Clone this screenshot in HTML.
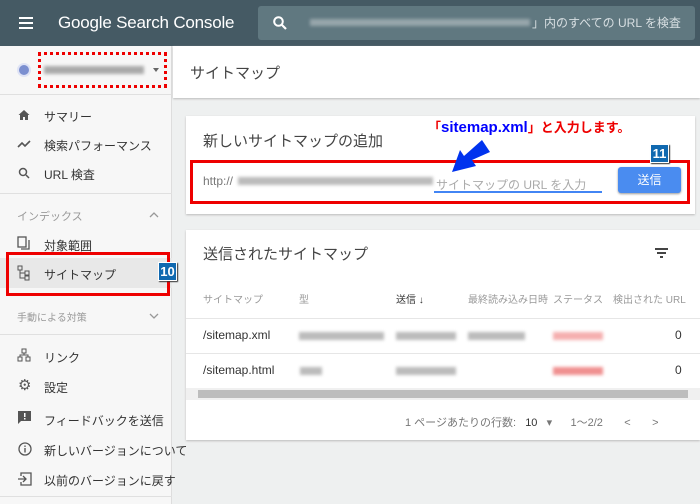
<!DOCTYPE html>
<html><head><meta charset="utf-8"><style>
*{margin:0;padding:0;box-sizing:border-box}
body{width:700px;height:504px;overflow:hidden;background:#eef0f0;font-family:"Liberation Sans","Noto Sans CJK JP",sans-serif;color:#333;position:relative}
.a{position:absolute}
.blur{position:absolute;filter:blur(1.5px);background:#bbb;height:8px}
.nav{position:absolute;left:44px;font-size:12px;color:#333}
.ic{position:absolute;left:18px}
</style></head><body>
<div class="a" style="left:0;top:0;width:700px;height:46px;background:#455a64"></div>
<div class="a" style="left:19px;top:17px;width:14px;height:2px;background:#fff;box-shadow:0 5px 0 #fff,0 10px 0 #fff"></div>
<div class="a" style="left:58px;top:13px;font-size:17px;color:#fff;letter-spacing:-0.2px">Google Search Console</div>
<div class="a" style="left:258px;top:6px;width:437px;height:34px;background:#607880;border-radius:3px"></div>
<svg class="a" style="left:272px;top:15px" width="16" height="16" viewBox="0 0 16 16"><circle cx="6.5" cy="6.5" r="4.3" fill="none" stroke="#fff" stroke-width="2"/><path d="M10 10l4 4" stroke="#fff" stroke-width="2.2"/></svg>
<div class="blur" style="left:310px;top:19px;width:220px;background:#97a6ab;height:7px"></div>
<div class="a" style="left:532px;top:14px;font-size:12px;color:#d8dfe2">」内のすべての URL を検査</div>

<div class="a" style="left:0;top:46px;width:172px;height:458px;background:#f7f7f7;border-right:1px solid #ddd"></div>
<div class="a" style="left:17px;top:63px;width:14px;height:14px;border-radius:50%;background:#7b8fd0;border:2px solid #dfe3f5"></div>
<div class="blur" style="left:44px;top:66px;width:100px;background:#aaa"></div>
<div class="a" style="left:153px;top:68px;border:3px solid transparent;border-top:4px solid #666"></div>
<div class="a" style="left:38px;top:52px;width:129px;height:36px;border:3px dotted #e00"></div>
<div class="a" style="left:0;top:94px;width:172px;height:1px;background:#e0e0e0"></div>
<svg class="a" style="left:18px;top:109px" width="12" height="12"><path d="M6 1L0.5 6H2v5h3V8h2v3h3V6h1.5Z" fill="#555"/></svg><div class="nav" style="top:108px">サマリー</div>
<svg class="a" style="left:17px;top:139px" width="14" height="10"><path d="M1 8l4-4 3 3 5-5" fill="none" stroke="#555" stroke-width="1.6"/></svg><div class="nav" style="top:137px">検索パフォーマンス</div>
<svg class="a" style="left:18px;top:167px" width="12" height="12"><circle cx="5" cy="5" r="3.5" fill="none" stroke="#555" stroke-width="1.5"/><path d="M8 8l3 3" stroke="#555" stroke-width="1.5"/></svg><div class="nav" style="top:166px">URL 検査</div>
<div class="a" style="left:0;top:193px;width:172px;height:1px;background:#e0e0e0"></div>
<div class="a" style="left:17px;top:208px;font-size:11px;color:#999">インデックス</div>
<svg class="a" style="left:149px;top:212px" width="10" height="6"><path d="M1 5l4-4 4 4" fill="none" stroke="#999" stroke-width="1.3"/></svg>
<svg class="a" style="left:17px;top:236px" width="13" height="14"><rect x="1" y="1" width="8" height="10" fill="none" stroke="#555" stroke-width="1.3"/><path d="M4 13h8V4" fill="none" stroke="#555" stroke-width="1.3"/></svg><div class="nav" style="top:237px">対象範囲</div>
<div class="a" style="left:0;top:258px;width:172px;height:30px;background:#e8e8e8"></div>
<svg class="a" style="left:17px;top:265px" width="14" height="16"><rect x="1" y="1" width="4" height="4" fill="none" stroke="#555"/><rect x="8" y="6" width="4" height="4" fill="none" stroke="#555"/><rect x="8" y="11" width="4" height="4" fill="none" stroke="#555"/><path d="M3 5v8h5M3 8h5" fill="none" stroke="#555"/></svg>
<div class="nav" style="top:266px">サイトマップ</div>
<div class="a" style="left:6px;top:252px;width:164px;height:44px;border:3px solid #e00"></div>
<div class="a" style="left:158px;top:262px;width:19px;height:19px;background:#1069b0;border:1px solid #fff;color:#fff;font-weight:bold;font-size:13px;line-height:17px;text-align:center;box-shadow:1px 1px 1px #333">10</div>
<div class="a" style="left:17px;top:309px;font-size:10px;color:#999">手動による対策</div>
<svg class="a" style="left:149px;top:313px" width="10" height="6"><path d="M1 1l4 4 4-4" fill="none" stroke="#999" stroke-width="1.3"/></svg>
<div class="a" style="left:0;top:334px;width:172px;height:1px;background:#e0e0e0"></div>
<svg class="a" style="left:17px;top:348px" width="14" height="14"><rect x="5" y="1" width="4" height="4" fill="none" stroke="#555"/><rect x="1" y="9" width="4" height="4" fill="none" stroke="#555"/><rect x="9" y="9" width="4" height="4" fill="none" stroke="#555"/><path d="M7 5v2H3v2M7 7h4v2" fill="none" stroke="#555"/></svg><div class="nav" style="top:349px">リンク</div>
<div class="ic" style="top:376px;font-size:15px;color:#555">⚙</div><div class="nav" style="top:379px">設定</div>
<svg class="a" style="left:18px;top:411px" width="13" height="13"><path d="M0 0h13v10H3l-3 3Z" fill="#555"/><rect x="6" y="2" width="1.5" height="4" fill="#fff"/><rect x="6" y="7" width="1.5" height="1.5" fill="#fff"/></svg><div class="nav" style="top:412px">フィードバックを送信</div>
<svg class="a" style="left:18px;top:442px" width="14" height="14"><circle cx="7" cy="7" r="6" fill="none" stroke="#555" stroke-width="1.3"/><rect x="6.3" y="6" width="1.4" height="4.5" fill="#555"/><rect x="6.3" y="3.5" width="1.4" height="1.4" fill="#555"/></svg><div class="nav" style="top:442px">新しいバージョンについて</div>
<svg class="a" style="left:18px;top:472px" width="14" height="14"><path d="M3 4V1h10v12H3v-3" fill="none" stroke="#555" stroke-width="1.3"/><path d="M0 7h8M5 4l3 3-3 3" fill="none" stroke="#555" stroke-width="1.3"/></svg><div class="nav" style="top:472px">以前のバージョンに戻す</div>
<div class="a" style="left:0;top:496px;width:172px;height:1px;background:#e0e0e0"></div>

<div class="a" style="left:173px;top:46px;width:527px;height:52px;background:#fff;box-shadow:0 1px 2px #bbb"></div>
<div class="a" style="left:190px;top:62px;font-size:15px;color:#444">サイトマップ</div>

<div class="a" style="left:186px;top:116px;width:509px;height:98px;background:#fff;box-shadow:0 1px 2px #bbb"></div>
<div class="a" style="left:203px;top:130px;font-size:15px;color:#444">新しいサイトマップの追加</div>
<div class="a" style="left:428px;top:117px;font-size:13px;font-weight:bold;color:#e00">「<span style="color:#00f;font-size:15px">sitemap.xml</span>」と入力します。</div>
<div class="a" style="left:190px;top:160px;width:500px;height:44px;border:3px solid #e00"></div>
<div class="a" style="left:203px;top:174px;font-size:12px;color:#777">http://</div>
<div class="blur" style="left:238px;top:177px;width:195px;background:#bbb"></div>
<div class="a" style="left:436px;top:176px;font-size:12px;color:#aaa">サイトマップの URL を入力</div>
<div class="a" style="left:434px;top:191px;width:168px;height:2px;background:#4285f4"></div>
<div class="a" style="left:618px;top:167px;width:63px;height:26px;background:#4a8cf0;border-radius:3px;color:#fff;font-size:12px;text-align:center;line-height:26px;box-shadow:0 1px 2px #999">送信</div>
<div class="a" style="left:650px;top:144px;width:19px;height:19px;background:#1069b0;border:1px solid #fff;color:#fff;font-weight:bold;font-size:13px;line-height:17px;text-align:center;box-shadow:1px 1px 1px #333">11</div>
<svg class="a" style="left:446px;top:138px" width="44" height="36"><path d="M36 2L44 14L26 22L30 28L6 34L14 12L18 18Z" fill="#0033ee"/></svg>

<div class="a" style="left:186px;top:230px;width:514px;height:210px;background:#fff;box-shadow:0 1px 2px #bbb"></div>
<div class="a" style="left:203px;top:243px;font-size:15px;color:#444">送信されたサイトマップ</div>
<div class="a" style="left:655px;top:248px;width:13px;height:2px;background:#444"></div>
<div class="a" style="left:657px;top:252px;width:9px;height:2px;background:#444"></div>
<div class="a" style="left:660px;top:256px;width:3px;height:2px;background:#444"></div>
<div class="a" style="left:203px;top:291px;font-size:10px;color:#999">サイトマップ</div>
<div class="a" style="left:299px;top:291px;font-size:10px;color:#999">型</div>
<div class="a" style="left:396px;top:291px;font-size:10px;color:#333">送信 ↓</div>
<div class="a" style="left:468px;top:291px;font-size:10px;color:#999">最終読み込み日時</div>
<div class="a" style="left:553px;top:291px;font-size:10px;color:#999">ステータス</div>
<div class="a" style="left:613px;top:291px;font-size:10px;color:#999">検出された URL</div>
<div class="a" style="left:186px;top:318px;width:514px;height:1px;background:#e6e6e6"></div>
<div class="a" style="left:203px;top:328px;font-size:12px;color:#333">/sitemap.xml</div>
<div class="blur" style="left:299px;top:332px;width:85px"></div>
<div class="blur" style="left:396px;top:332px;width:60px"></div>
<div class="blur" style="left:468px;top:332px;width:57px"></div>
<div class="blur" style="left:553px;top:332px;width:50px;background:#f5b0b0"></div>
<div class="a" style="left:675px;top:328px;font-size:12px;color:#333">0</div>
<div class="a" style="left:186px;top:353px;width:514px;height:1px;background:#e6e6e6"></div>
<div class="a" style="left:203px;top:363px;font-size:12px;color:#333">/sitemap.html</div>
<div class="blur" style="left:300px;top:367px;width:22px"></div>
<div class="blur" style="left:396px;top:367px;width:60px"></div>
<div class="blur" style="left:553px;top:367px;width:50px;background:#f09090"></div>
<div class="a" style="left:675px;top:363px;font-size:12px;color:#333">0</div>
<div class="a" style="left:186px;top:388px;width:514px;height:12px;background:#f0f0f0"></div>
<div class="a" style="left:198px;top:390px;width:490px;height:8px;background:#bdbdbd"></div>
<div class="a" style="left:405px;top:414px;font-size:11px;color:#777">1 ページあたりの行数:&nbsp;&nbsp;&nbsp;<span style="color:#333">10</span>&nbsp;&nbsp;&nbsp;▾&nbsp;&nbsp;&nbsp;&nbsp;&nbsp;&nbsp;1〜2/2&nbsp;&nbsp;&nbsp;&nbsp;&nbsp;&nbsp;&nbsp;&lt;&nbsp;&nbsp;&nbsp;&nbsp;&nbsp;&nbsp;&nbsp;&gt;</div>
</body></html>
